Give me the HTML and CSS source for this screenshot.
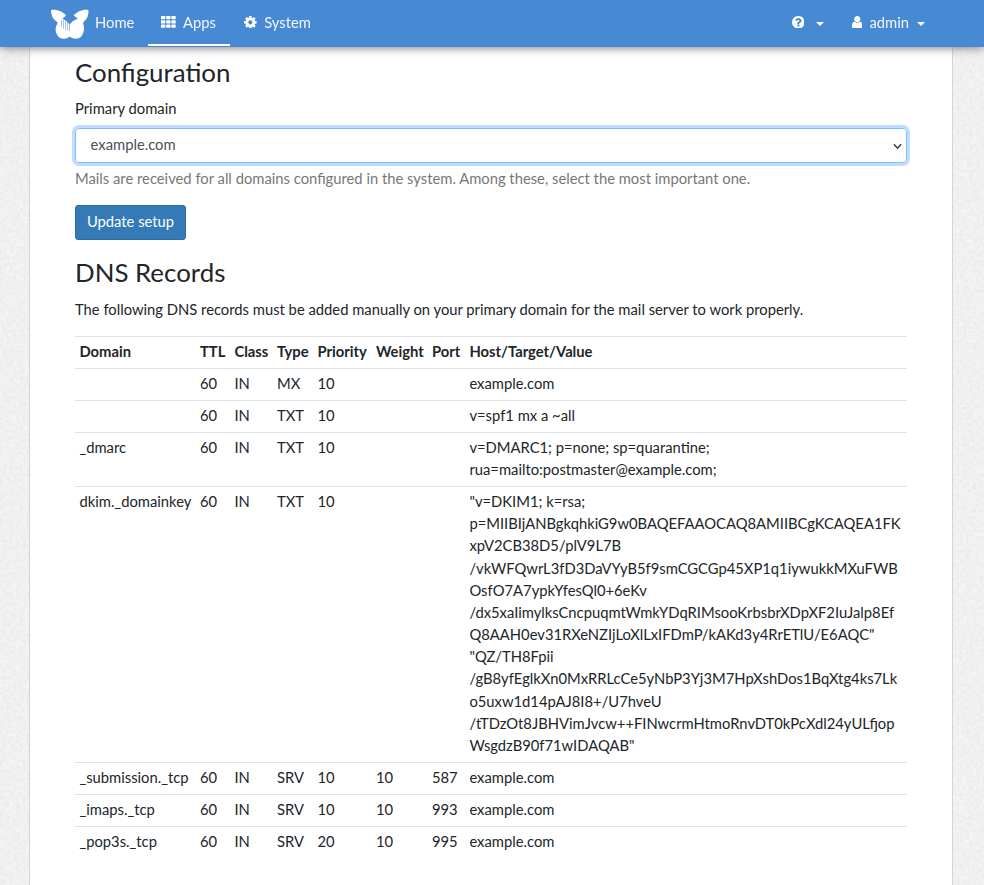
FILE: index.html
```html
<!DOCTYPE html>
<html lang="en">
<head>
<meta charset="utf-8">
<title>Email Server</title>
<link rel="stylesheet" href="styles.css">
</head>
<body>
<svg class="texture" aria-hidden="true">
  <filter id="paper" x="0" y="0" width="100%" height="100%" color-interpolation-filters="sRGB">
    <feTurbulence type="fractalNoise" baseFrequency="0.3" numOctaves="3" seed="4"/>
    <feColorMatrix values="0.07 0 0 0 0.907  0.07 0 0 0 0.907  0.07 0 0 0 0.907  0 0 0 0 1"/>
  </filter>
  <rect width="100%" height="100%" filter="url(#paper)"/>
</svg>
<nav class="navbar">
  <a class="brand">
    <svg class="logo" viewBox="50 8 40 32">
      <path fill="#fff" d="M51 10C55.500 8.800 63 11 66.200 15.600L62.300 18.800C65 20 68 22 69.700 24.500C71.400 22 74.400 20 77.900 18.800L73.600 15.600C77 11 84 8.800 88.500 10C88.500 15 87.500 18.500 84.500 21C83.500 22 83 22.500 83.300 24C84.700 27.500 84.200 33 81.500 36C79 39.500 73.500 39.500 69.700 36.500C66 39.500 60 39.500 58 36C55.300 33 54.800 27.500 57.200 24C57.700 22.500 57.500 22 56 21C52.500 18.500 51 15 51 10Z"/>
      <path class="stripes" d="M61.500 20V27M63.500 20V29M65.500 20.500V30M67.500 22V31M69.500 24V31.500"/>
    </svg>
    <span>Home</span>
  </a>
  <a class="item active">
    <svg class="icon th" viewBox="0 0 15 12" fill="#fff"><rect width="4.300" height="3.200" rx=".6"/><rect x="5.200" width="4.300" height="3.200" rx=".6"/><rect x="10.400" width="4.300" height="3.200" rx=".6"/><rect y="4.300" width="4.300" height="3.200" rx=".6"/><rect x="5.200" y="4.300" width="4.300" height="3.200" rx=".6"/><rect x="10.400" y="4.300" width="4.300" height="3.200" rx=".6"/><rect y="8.600" width="4.300" height="3.200" rx=".6"/><rect x="5.200" y="8.600" width="4.300" height="3.200" rx=".6"/><rect x="10.400" y="8.600" width="4.300" height="3.200" rx=".6"/></svg>
    <span>Apps</span>
  </a>
  <a class="item">
    <svg class="icon" viewBox="128 128 1536 1536" fill="#fff"><path d="M1152 896q0-106-75-181t-181-75-181 75-75 181 75 181 181 75 181-75 75-181zm512-109v222q0 12-8 23t-20 13l-185 28q-19 54-39 91 35 50 107 138 10 12 10 25t-9 23q-27 37-99 108t-94 71q-12 0-26-9l-138-108q-44 23-91 38-16 136-29 186-7 28-36 28h-222q-14 0-24.500-8.500t-11.500-21.500l-28-184q-49-16-90-37l-141 107q-10 9-25 9-14 0-25-11-126-114-165-168-7-10-7-23 0-12 8-23 15-21 51-66.500t54-70.500q-27-50-41-99l-183-27q-13-2-21-12.500t-8-23.500v-222q0-12 8-23t19-13l186-28q14-46 39-92-40-57-107-138-10-12-10-24 0-10 9-23 26-36 98.500-107.500t94.500-71.500q13 0 26 10l138 107q44-23 91-38 16-136 29-186 7-28 36-28h222q14 0 24.500 8.500t11.500 21.500l28 184q49 16 90 37l142-107q9-9 24-9 13 0 25 10 129 119 165 170 7 8 7 22 0 12-8 23-15 21-51 66.500t-54 70.500q26 50 41 98l183 28q13 2 21 12.500t8 23.500z"/></svg>
    <span>System</span>
  </a>
  <a class="item help">
    <svg class="icon" viewBox="128 128 1536 1536" fill="#fff"><path d="M1024 1376v-192q0-14-9-23t-23-9h-192q-14 0-23 9t-9 23v192q0 14 9 23t23 9h192q14 0 23-9t9-23zm256-672q0-88-55.500-163t-138.500-116-170-41q-243 0-371 213-15 24 8 42l132 100q7 6 19 6 16 0 25-12 53-68 86-92 34-24 86-24 48 0 85.500 26t37.500 59q0 38-20 61t-68 45q-63 28-115.500 86.500t-52.500 125.500v36q0 14 9 23t23 9h192q14 0 23-9t9-23q0-19 21.500-49.500t54.500-49.500q32-18 49-28.500t46-35 44.500-48 28-60.500 12.500-81zm384 192q0 209-103 385.500t-279.500 279.500-385.500 103-385.500-103-279.500-279.500-103-385.500 103-385.500 279.500-279.500 385.500-103 385.500 103 279.500 279.500 103 385.500z"/></svg>
    <i class="caret"></i>
  </a>
  <a class="item user">
    <svg class="icon person" viewBox="256 128 1280 1536" fill="#fff"><path d="M1536 1399q0 109-62.500 187t-150.500 78h-854q-88 0-150.500-78t-62.500-187q0-85 8.500-160.500t31.500-152 58.500-131 94-89 134.500-34.500q131 128 313 128t313-128q76 0 134.500 34.500t94 89 58.500 131 31.500 152 8.500 160.500zm-256-887q0 159-112.500 271.500t-271.500 112.500-271.500-112.500-112.500-271.500 112.500-271.500 271.500-112.500 271.500 112.500 112.500 271.500z"/></svg>
    <span>admin</span>
    <i class="caret"></i>
  </a>
</nav>
<main class="content">
  <h3>Configuration</h3>
  <label class="label">Primary domain</label>
  <div class="select">
    <span>example.com</span>
    <svg class="chevron" viewBox="0 0 8 6"><path d="M.8 1L4 4.500L7.200 1" fill="none" stroke="#343a40" stroke-width="1.300"/></svg>
  </div>
  <p class="hint">Mails are received for all domains configured in the system. Among these, select the most important one.</p>
  <button class="button">Update setup</button>
  <h3>DNS Records</h3>
  <p class="intro">The following DNS records must be added manually on your primary domain for the mail server to work properly.</p>
  <table class="records">
    <colgroup><col class="c-domain"><col class="c-ttl"><col class="c-class"><col class="c-type"><col class="c-priority"><col class="c-weight"><col class="c-port"><col></colgroup>
    <thead>
      <tr><th>Domain</th><th>TTL</th><th>Class</th><th>Type</th><th>Priority</th><th>Weight</th><th>Port</th><th>Host/Target/Value</th></tr>
    </thead>
    <tbody>
      <tr><td></td><td>60</td><td>IN</td><td>MX</td><td>10</td><td></td><td></td><td>example.com</td></tr>
      <tr><td></td><td>60</td><td>IN</td><td>TXT</td><td>10</td><td></td><td></td><td>v=spf1 mx a ~all</td></tr>
      <tr><td>_dmarc</td><td>60</td><td>IN</td><td>TXT</td><td>10</td><td></td><td></td><td>v=DMARC1; p=none; sp=quarantine;<br>rua=mailto:postmaster@example.com;</td></tr>
      <tr><td>dkim._domainkey</td><td>60</td><td>IN</td><td>TXT</td><td>10</td><td></td><td></td><td>"v=DKIM1; k=rsa;<br>p=MIIBIjANBgkqhkiG9w0BAQEFAAOCAQ8AMIIBCgKCAQEA1FK<br>xpV2CB38D5/plV9L7B<br>/vkWFQwrL3fD3DaVYyB5f9smCGCGp45XP1q1iywukkMXuFWB<br>OsfO7A7ypkYfesQl0+6eKv<br>/dx5xaIimylksCncpuqmtWmkYDqRIMsooKrbsbrXDpXF2IuJalp8Ef<br>Q8AAH0ev31RXeNZIjLoXlLxIFDmP/kAKd3y4RrETlU/E6AQC"<br>"QZ/TH8Fpii<br>/gB8yfEglkXn0MxRRLcCe5yNbP3Yj3M7HpXshDos1BqXtg4ks7Lk<br>o5uxw1d14pAJ8I8+/U7hveU<br>/tTDzOt8JBHVimJvcw++FINwcrmHtmoRnvDT0kPcXdl24yULfjop<br>WsgdzB90f71wIDAQAB"</td></tr>
      <tr><td>_submission._tcp</td><td>60</td><td>IN</td><td>SRV</td><td>10</td><td>10</td><td>587</td><td>example.com</td></tr>
      <tr><td>_imaps._tcp</td><td>60</td><td>IN</td><td>SRV</td><td>10</td><td>10</td><td>993</td><td>example.com</td></tr>
      <tr><td>_pop3s._tcp</td><td>60</td><td>IN</td><td>SRV</td><td>20</td><td>10</td><td>995</td><td>example.com</td></tr>
    </tbody>
  </table>
</main>
</body>
</html>
```
FILE: styles.css
```css
* { box-sizing: border-box; }

html { font-size: 14.78px; }

body {
  margin: 0;
  height: 885px;
  overflow: hidden;
  display: flex;
  flex-direction: column;
  background: #f0f0f0;
  color: #212529;
  font-family: Lato, "Liberation Sans", sans-serif;
  font-size: 1rem;
  line-height: 1.5;
}

.texture {
  position: absolute;
  inset: 0;
  width: 100%;
  height: 100%;
  z-index: -1;
}

.navbar {
  position: relative;
  z-index: 1;
  flex: none;
  display: flex;
  height: 47px;
  padding-left: 50px;
  padding-right: 46px;
  background: #4889d4;
  box-shadow: 0 0 10px #666;
  color: #fff;
}

.brand, .item {
  display: flex;
  align-items: center;
  height: 46px;
  padding-bottom: 2px;
}

.brand { width: 98px; }
.logo { width: 40px; height: 32px; margin: 4px 5px 0 0; }
.stripes { stroke: #4889d4; stroke-width: .7; opacity: .7; }

.item { padding: 0 13px 2px; }
.item.active { width: 82px; border-bottom: 2px solid #fff; padding-bottom: 0; }
.item.active + .item { padding-left: 14px; }
.icon { width: 12.7px; height: 12.7px; margin-right: 7.5px; }
.th { width: 15px; height: 12px; margin-right: 7px; }
.person { width: 10.5px; height: 12.6px; margin-right: 7px; }
.item span, .brand span { opacity: .92; }
.help { margin-left: auto; padding-right: 15px; }

.caret {
  border: 4px solid transparent;
  border-top-color: #fff;
  border-bottom: 0;
  margin-top: 3px;
  margin-left: 4px;
}

.user { padding-right: 13px; }
.user .caret { margin-left: 8px; }

.content {
  flex: 1;
  width: 924px;
  margin: 0 auto 0 29px;
  padding: 10px 45px 0;
  border: 1px solid #d4d4d4;
  border-width: 0 1px;
  background: #fff;
}

h3 {
  margin: 0 0 9px;
  font-size: 25.85px;
  font-weight: 400;
  line-height: 31px;
}

.label { display: block; height: 30px; }

.select {
  display: flex;
  align-items: center;
  justify-content: space-between;
  height: 35px;
  margin-top: 1px;
  padding: 0 4px 2px 14.6px;
  border: 1px solid #80bdff;
  border-radius: 4px;
  box-shadow: 0 0 0 3px #bfdeff;
  color: #495057;
}

.chevron { width: 9px; height: 7px; margin-top: 3px; }
.hint { margin: 4px 0 0; height: 38px; color: #777; }

.button {
  display: block;
  width: 111px;
  height: 35px;
  margin-bottom: 17px;
  padding: 0 0 3px;
  border: 1px solid #2e6da4;
  border-radius: 3px;
  background: #337ab7;
  color: #fff;
  font: inherit;
}

.intro { height: 38px; margin: 10px 0 0; }

.records {
  width: 100%;
  table-layout: fixed;
  border-collapse: collapse;
}

.records th, .records td {
  padding: 3.1px .3rem 5.7px;
  border-top: 1px solid #dee2e6;
  text-align: left;
  vertical-align: top;
  white-space: nowrap;
}

.c-domain { width: 120.500px; }
.c-ttl { width: 34.500px; }
.c-class { width: 42.500px; }
.c-type { width: 40.500px; }
.c-priority { width: 58.500px; }
.c-weight { width: 56px; }
.c-port { width: 37.500px; }
```
